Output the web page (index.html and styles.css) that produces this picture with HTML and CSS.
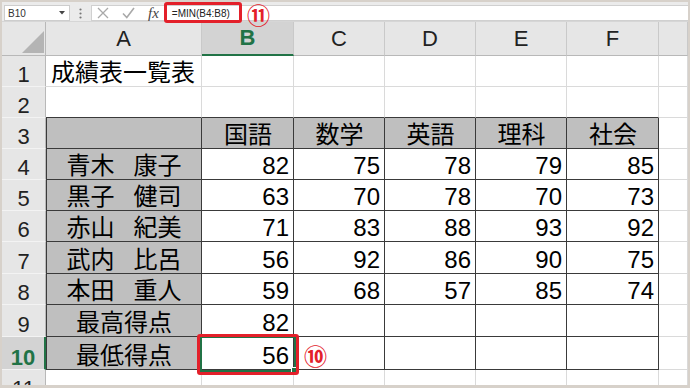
FILE: index.html
```html
<!DOCTYPE html>
<html lang="ja">
<head>
<meta charset="utf-8">
<title>成績表一覧表</title>
<link rel="stylesheet" href="styles.css">
</head>
<body>
<div class="frame">
  <div class="fbar">
    <div class="namebox"><span class="nb-text">B10</span><svg class="dd" width="6" height="4" viewBox="0 0 6 4"><polygon points="0,0 6,0 3,3.5" fill="#444"/></svg></div>
    <div class="dots"><svg width="3" height="11" viewBox="0 0 3 11"><circle cx="1.5" cy="1.5" r="1.1" fill="#777"/><circle cx="1.5" cy="5.5" r="1.1" fill="#777"/><circle cx="1.5" cy="9.5" r="1.1" fill="#777"/></svg></div>
    <div class="fbox">
      <svg class="ic-x" width="12" height="12" viewBox="0 0 12 12"><path d="M1 1 L11 11 M11 1 L1 11" stroke="#a9a9a9" stroke-width="1.3" fill="none"/></svg>
      <svg class="ic-ok" width="13" height="12" viewBox="0 0 13 12"><path d="M1 6.5 L4.8 10.5 L12 1" stroke="#a9a9a9" stroke-width="1.6" fill="none"/></svg>
      <span class="fx">fx</span>
      <span class="formula">=MIN(B4:B8)</span>
    </div>
  </div>
  <div class="sheet">
    <div class="corner"><svg width="22" height="22" viewBox="0 0 22 22"><polygon points="22,0 22,22 0,22" fill="#b4b4b4"/></svg></div>
    <div class="ch">A</div><div class="ch sel">B</div><div class="ch">C</div><div class="ch">D</div><div class="ch">E</div><div class="ch">F</div><div class="ch"></div>

    <div class="rh">1</div><div class="c title">成績表一覧表</div><div class="c"></div><div class="c"></div><div class="c"></div><div class="c"></div><div class="c"></div><div class="c"></div>

    <div class="rh">2</div><div class="c tt"></div><div class="c tt"></div><div class="c tt"></div><div class="c tt"></div><div class="c tt"></div><div class="c tt"></div><div class="c"></div>

    <div class="rh">3</div><div class="c g t tl"></div><div class="c g t ctr">国語</div><div class="c g t ctr">数学</div><div class="c g t ctr">英語</div><div class="c g t ctr">理科</div><div class="c g t ctr">社会</div><div class="c"></div>

    <div class="rh">4</div><div class="c g t tl ctr">青木<span class="sp">　</span>康子</div><div class="c t num">82</div><div class="c t num">75</div><div class="c t num">78</div><div class="c t num">79</div><div class="c t num">85</div><div class="c"></div>

    <div class="rh">5</div><div class="c g t tl ctr">黒子<span class="sp">　</span>健司</div><div class="c t num">63</div><div class="c t num">70</div><div class="c t num">78</div><div class="c t num">70</div><div class="c t num">73</div><div class="c"></div>

    <div class="rh">6</div><div class="c g t tl ctr">赤山<span class="sp">　</span>紀美</div><div class="c t num">71</div><div class="c t num">83</div><div class="c t num">88</div><div class="c t num">93</div><div class="c t num">92</div><div class="c"></div>

    <div class="rh">7</div><div class="c g t tl ctr">武内<span class="sp">　</span>比呂</div><div class="c t num">56</div><div class="c t num">92</div><div class="c t num">86</div><div class="c t num">90</div><div class="c t num">75</div><div class="c"></div>

    <div class="rh">8</div><div class="c g t tl ctr">本田<span class="sp">　</span>重人</div><div class="c t num">59</div><div class="c t num">68</div><div class="c t num">57</div><div class="c t num">85</div><div class="c t num">74</div><div class="c"></div>

    <div class="rh">9</div><div class="c g t tl ctr">最高得点</div><div class="c t num">82</div><div class="c t"></div><div class="c t"></div><div class="c t"></div><div class="c t"></div><div class="c"></div>

    <div class="rh sel">10</div><div class="c g t tl ctr">最低得点</div><div class="c t num">56</div><div class="c t"></div><div class="c t"></div><div class="c t"></div><div class="c t"></div><div class="c"></div>

    <div class="rh">11</div><div class="c"></div><div class="c"></div><div class="c"></div><div class="c"></div><div class="c"></div><div class="c"></div><div class="c"></div>
  </div>

  <div class="selbox"><span class="handle"></span></div>
  <div class="redbox rb-formula"></div>
  <div class="redbox rb-cell"></div>
  <span class="ann ann11">⑪</span>
  <span class="ann ann10">⑩</span>
</div>
</body>
</html>
```

FILE: styles.css
```css
body {
  margin: 0;
  background: #fff;
}

.frame {
  position: relative;
  width: 690px;
  height: 388px;
  box-sizing: border-box;
  border: 2px solid #d7d1ca;
  border-bottom-width: 3px;
  background: #fff;
  overflow: hidden;
  font-family: "Liberation Sans", "Noto Sans CJK JP", sans-serif;
}

/* formula bar */
.fbar {
  height: 20px;
  box-sizing: border-box;
  background: #ebebeb;
  border-bottom: 1px solid #d6d6d6;
  display: flex;
  align-items: flex-start;
  padding-top: 3px;
}

.namebox {
  margin-left: 2px;
  width: 66px;
  height: 16px;
  box-sizing: border-box;
  background: #fff;
  border: 1px solid #cdcdcd;
  display: flex;
  align-items: center;
  justify-content: space-between;
  padding: 0 4px 0 3px;
  font-size: 10px;
  color: #333;
}

.dd {
  display: block;
}

.dots {
  width: 21px;
  height: 16px;
  display: flex;
  align-items: center;
  justify-content: center;
}

.dots svg {
  display: block;
}

.fbox {
  flex: 1;
  height: 16px;
  box-sizing: border-box;
  background: #fff;
  border: 1px solid #d0d0d0;
  border-right: none;
  display: flex;
  align-items: center;
}

.ic-x {
  margin-left: 5px;
  display: block;
}

.ic-ok {
  margin-left: 13px;
  display: block;
}

.fx {
  margin-left: 13px;
  font-family: "Liberation Serif", serif;
  font-style: italic;
  font-size: 15px;
  line-height: 14px;
  color: #444;
}

.formula {
  margin-left: 13px;
  font-size: 10px;
  color: #222;
}

/* sheet grid */
.sheet {
  display: grid;
  grid-template-columns: 44px 156px 92px 91px 91px 91px 92px 29px;
  grid-template-rows: 34px 31px 31px 31px 31px 31px 31px 32px 31px 32px 33px 31px;
  height: 363px;
  overflow: hidden;
}

.corner {
  background: #e6e6e6;
  border-right: 1px solid #b8b8b8;
  border-bottom: 1px solid #b8b8b8;
  box-sizing: border-box;
  display: flex;
  align-items: flex-end;
  justify-content: flex-end;
  padding: 0 1px 2px 0;
}

.corner svg {
  display: block;
}

.ch {
  background: #e6e6e6;
  box-sizing: border-box;
  border-right: 1px solid #c9c9c9;
  border-bottom: 1px solid #b8b8b8;
  display: flex;
  align-items: center;
  justify-content: center;
  font-size: 22px;
  line-height: 1;
  color: #222;
}

.ch.sel {
  background: #d3d3d3;
  color: #217346;
  font-weight: bold;
  border-bottom: 2px solid #217346;
}

.rh {
  background: #e6e6e6;
  box-sizing: border-box;
  border-right: 1px solid #b8b8b8;
  border-bottom: 1px solid #f3f3f3;
  display: flex;
  align-items: flex-end;
  justify-content: center;
  font-size: 22px;
  line-height: 22px;
  color: #222;
  overflow: hidden;
}

.rh.sel {
  background: #d3d3d3;
  color: #217346;
  font-weight: bold;
  border-right: 2px solid #217346;
}

.c {
  box-sizing: border-box;
  border-right: 1px solid #dadada;
  border-bottom: 1px solid #dadada;
  display: flex;
  align-items: flex-end;
  padding: 0 4px 1px 5px;
  font-size: 24px;
  line-height: 24px;
  color: #000;
  white-space: nowrap;
}

.sp {
  letter-spacing: -5px;
}

.title {
  justify-content: flex-start;
}

.num {
  justify-content: flex-end;
}

.ctr {
  justify-content: center;
}

.g {
  background: #bfbfbf;
}

.t {
  border-right-color: #3a3a3a;
  border-bottom-color: #3a3a3a;
}

.tl {
  box-shadow: inset 1px 0 #3a3a3a;
}

.tt {
  border-bottom-color: #3a3a3a;
}

/* overlays */
.selbox {
  position: absolute;
  left: 198px;
  top: 334px;
  width: 96px;
  height: 36px;
  box-sizing: border-box;
  border: 2px solid #217346;
}

.handle {
  position: absolute;
  right: -4px;
  bottom: -4px;
  width: 5px;
  height: 5px;
  background: #217346;
  border: 1px solid #fff;
}

.redbox {
  position: absolute;
  box-sizing: border-box;
  border: 3px solid #e3202a;
  border-radius: 3px;
}

.rb-formula {
  left: 162px;
  top: 0;
  width: 78px;
  height: 21px;
}

.rb-cell {
  left: 195px;
  top: 332px;
  width: 102px;
  height: 41px;
}

.ann {
  position: absolute;
  font-family: "Noto Sans CJK JP", sans-serif;
  font-size: 23px;
  line-height: 19px;
  font-weight: bold;
  color: #e3202a;
}

.ann11 {
  left: 245px;
  top: 3px;
}

.ann10 {
  left: 302px;
  top: 344px;
}
```
